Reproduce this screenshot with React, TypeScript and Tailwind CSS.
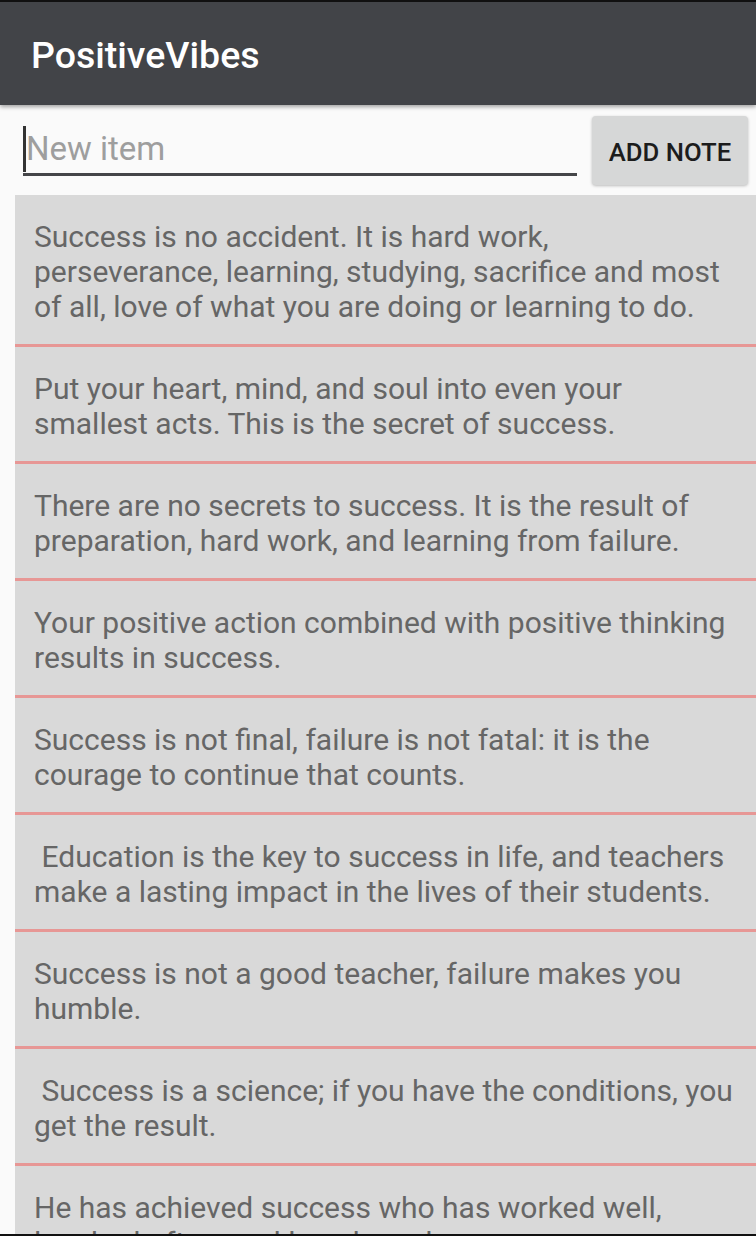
import React from "react";

const notes = [
  "Success is no accident. It is hard work, perseverance, learning, studying, sacrifice and most of all, love of what you are doing or learning to do.",
  "Put your heart, mind, and soul into even your smallest acts. This is the secret of success.",
  "There are no secrets to success. It is the result of preparation, hard work, and learning from failure.",
  "Your positive action combined with positive thinking results in success.",
  "Success is not final, failure is not fatal: it is the courage to continue that counts.",
  "\u00a0Education is the key to success in life, and teachers make a lasting impact in the lives of their students.",
  "Success is not a good teacher, failure makes you humble.",
  "\u00a0Success is a science; if you have the conditions, you get the result.",
  "He has achieved success who has worked well, laughed often, and loved much.",
];

export default function App() {
  return (
    <div
      className="flex h-[1236px] w-[756px] flex-col overflow-hidden bg-[#fafafa]"
      style={{ fontFamily: "Roboto, 'Noto Sans', sans-serif" }}
    >
      <div className="h-[2px] bg-[#111]" />
      {/* toolbar */}
      <div className="relative z-10 flex h-[103px] items-center bg-[#424448] pl-[31px] pt-[5px] shadow-[0_2px_4px_rgba(0,0,0,0.35)]">
        <h1 className="text-[37.5px] font-medium leading-none text-white">
          PositiveVibes
        </h1>
      </div>

      {/* input row */}
      <div className="flex h-[90px] items-start gap-[15px] pl-[23px] pr-[8px]">
        <div className="mt-[19px] flex h-[52px] flex-1 items-center border-b-[3px] border-[#444548]">
          <div className="h-[46px] w-[3px] bg-[#333]" />
          <span className="text-[33px] leading-none text-[#9e9e9e]">New item</span>
        </div>
        <button className="mt-[11px] flex h-[69px] w-[156px] items-center justify-center rounded-[4px] bg-[#d6d7d7] pt-[3px] text-[25.7px] font-medium text-[#1c1c1c] shadow-[0_1px_3px_rgba(0,0,0,0.25)]">
          ADD NOTE
        </button>
      </div>

      {/* list */}
      <div className="ml-[15px] flex-1 overflow-hidden">
        {notes.map((n, i) => (
          <div
            key={i}
            className="border-b-[3px] border-[#e79795] bg-[#d9d9d9] pb-[20px] pl-[19px] pr-[18px] pt-[24px] text-[30px] leading-[35px] text-[#666666]"
          >
            {n}
          </div>
        ))}
      </div>
      <div className="h-[2px] bg-[#111]" />
    </div>
  );
}
